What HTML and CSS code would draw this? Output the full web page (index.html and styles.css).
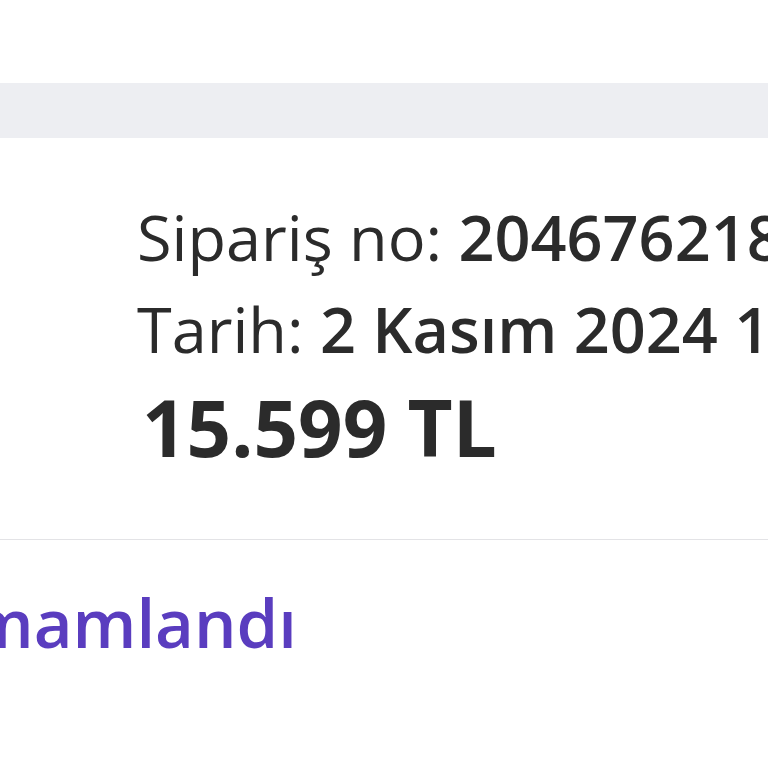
FILE: index.html
```html
<!DOCTYPE html>
<html>
<head>
  <meta charset="UTF-8">
  <title>Sipariş Detayı</title>
  <link rel="stylesheet" href="styles.css">
</head>
<body>
  <div class="page">
    <div class="top-space"></div>
    <div class="band"></div>

    <div class="order-info">
      <p class="line">Sipariş no: <span class="value">2046762188</span></p>
      <p class="line">Tarih: <span class="value">2 Kasım 2024 14:32</span></p>
      <p class="price">15.599 TL</p>
    </div>

    <div class="status">
      <span class="status-text">Tamamlandı</span>
    </div>
  </div>
</body>
</html>
```

FILE: styles.css
```css
:root {
  --text-dark: #2b2b2b;
  --band-gray: #edeef2;
  --divider: #e3e3e6;
  --status-purple: #5a3dbf;
}

body {
  margin: 0;
  background: #ffffff;
  font-family: 'Open Sans', 'Noto Sans', sans-serif;
  color: var(--text-dark);
}

.page {
  width: 768px;
  height: 768px;
  overflow: hidden;
}

.top-space {
  height: 83px;
}

.band {
  height: 55px;
  background: var(--band-gray);
}

.order-info {
  padding: 53px 0 62px 137px;
  border-bottom: 1px solid var(--divider);
  white-space: nowrap;
}

.line {
  margin: 0;
  font-size: 63px;
  line-height: 92px;
  font-weight: 400;
}

.line .value {
  font-weight: 600;
}

.price {
  margin: 2px 0 0 5px;
  font-size: 78px;
  line-height: 100px;
  font-weight: 700;
}

.status {
  margin-top: 37px;
  white-space: nowrap;
}

.status-text {
  display: inline-block;
  margin-left: -107px;
  font-size: 67px;
  line-height: 90px;
  font-weight: 600;
  color: var(--status-purple);
}
```
